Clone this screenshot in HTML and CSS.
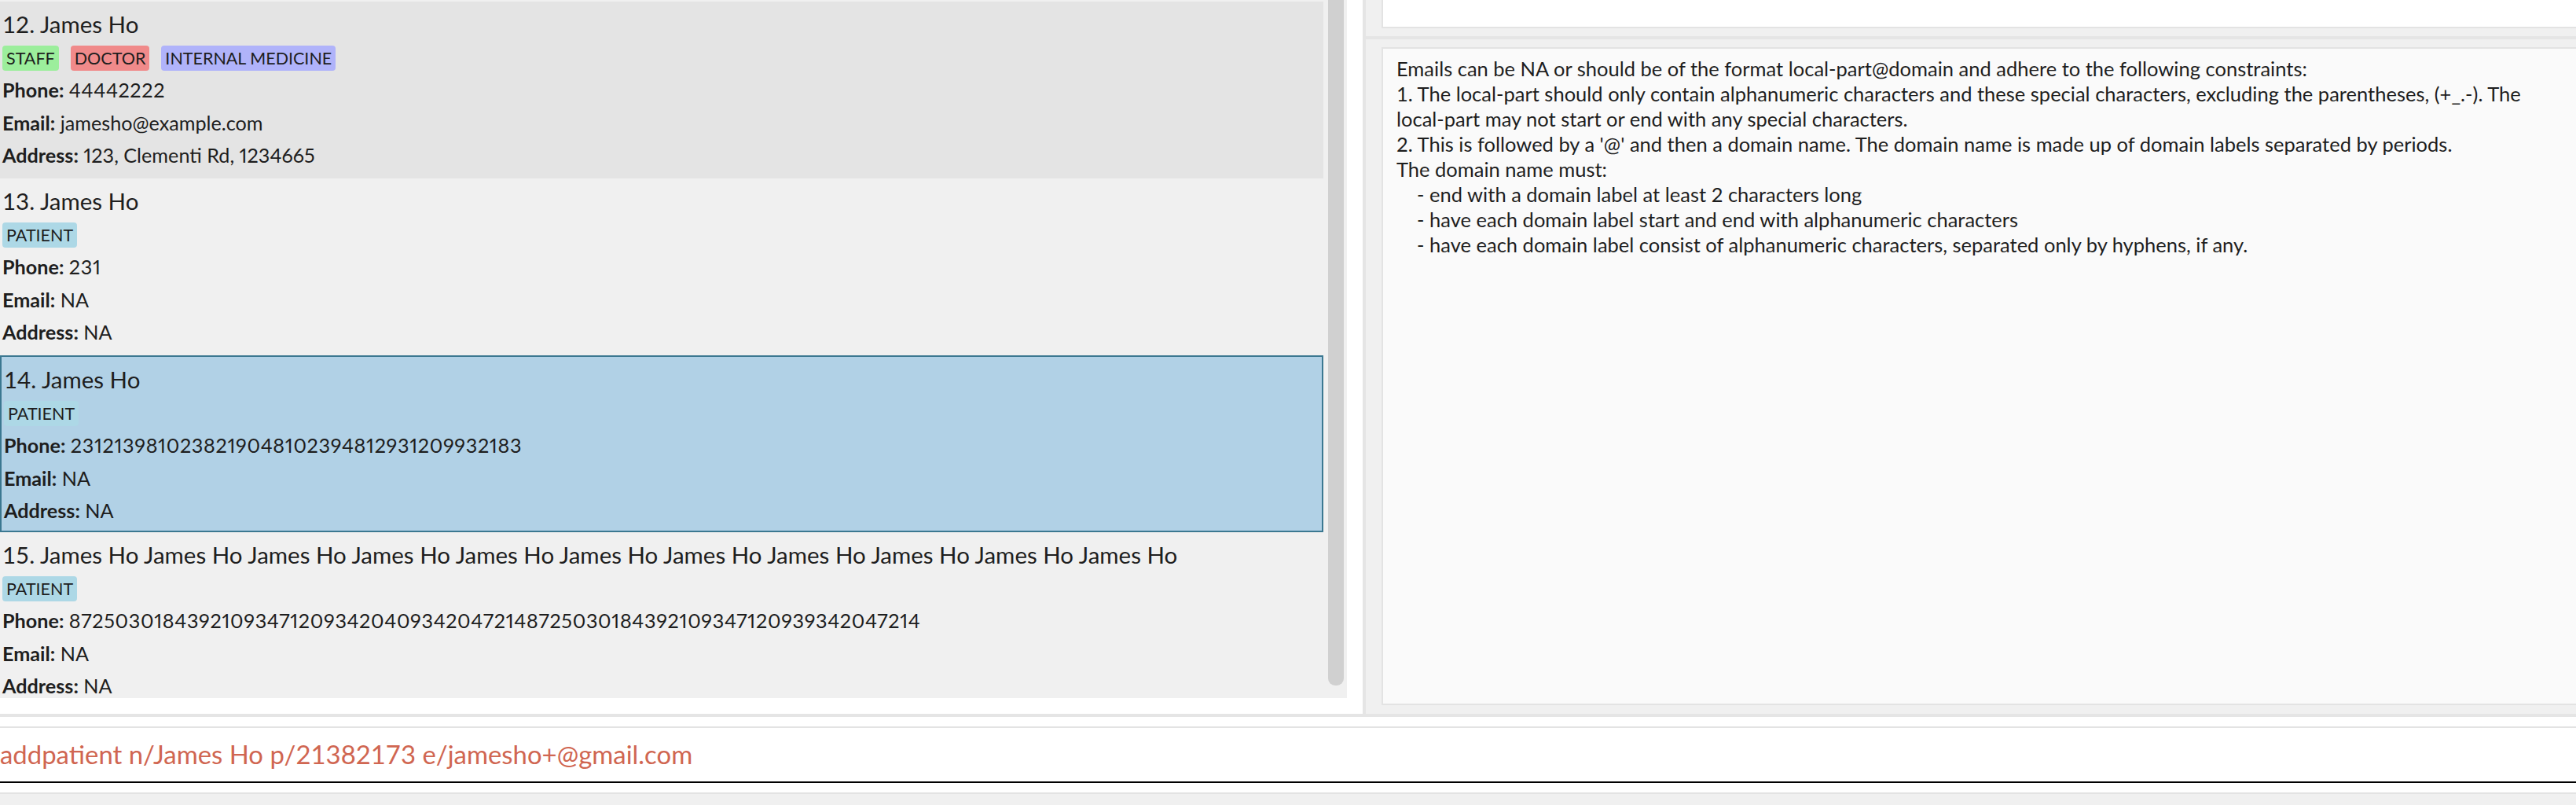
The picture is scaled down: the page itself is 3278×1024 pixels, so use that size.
FILE: index.html
```html
<!DOCTYPE html>
<html>
<head>
<meta charset="utf-8">
<title>Patients</title>
<link rel="stylesheet" href="styles.css">
</head>
<body>
<div class="app">
  <div class="main">
    <div class="left">
      <div class="list">
        <div class="cells">
          <div class="card dark">
            <div class="name">12. James Ho</div>
            <div class="tags"><span class="tag staff">STAFF</span><span class="tag doctor">DOCTOR</span><span class="tag spec">INTERNAL MEDICINE</span></div>
            <div class="field"><b>Phone:</b> <span class="num">44442222</span></div>
            <div class="field"><b>Email:</b> jamesho@example.com</div>
            <div class="field"><b>Address:</b> 123, Clementi Rd, 1234665</div>
          </div>
          <div class="card light">
            <div class="name">13. James Ho</div>
            <div class="tags"><span class="tag patient">PATIENT</span></div>
            <div class="field"><b>Phone:</b> <span class="num">231</span></div>
            <div class="field"><b>Email:</b> NA</div>
            <div class="field"><b>Address:</b> NA</div>
          </div>
          <div class="card sel">
            <div class="name">14. James Ho</div>
            <div class="tags"><span class="tag patient">PATIENT</span></div>
            <div class="field"><b>Phone:</b> <span class="num">2312139810238219048102394812931209932183</span></div>
            <div class="field"><b>Email:</b> NA</div>
            <div class="field"><b>Address:</b> NA</div>
          </div>
          <div class="card light">
            <div class="name">15. James Ho James Ho James Ho James Ho James Ho James Ho James Ho James Ho James Ho James Ho James Ho</div>
            <div class="tags"><span class="tag patient">PATIENT</span></div>
            <div class="field"><b>Phone:</b> <span class="num">8725030184392109347120934204093420472148725030184392109347120939342047214</span></div>
            <div class="field"><b>Email:</b> NA</div>
            <div class="field"><b>Address:</b> NA</div>
          </div>
        </div>
        <div class="scroll"><div class="thumb"></div></div>
      </div>
    </div>
    <div class="divider"></div>
    <div class="right">
      <div class="result-top"></div>
      <div class="hdiv"></div>
      <div class="result">
        <div class="line">Emails can be NA or should be of the format local-part@domain and adhere to the following constraints:</div>
        <div class="line">1. The local-part should only contain alphanumeric characters and these special characters, excluding the parentheses, (+_.-). The</div>
        <div class="line">local-part may not start or end with any special characters.</div>
        <div class="line">2. This is followed by a '@' and then a domain name. The domain name is made up of domain labels separated by periods.</div>
        <div class="line">The domain name must:</div>
        <div class="line">    - end with a domain label at least 2 characters long</div>
        <div class="line">    - have each domain label start and end with alphanumeric characters</div>
        <div class="line">    - have each domain label consist of alphanumeric characters, separated only by hyphens, if any.</div>
      </div>
    </div>
  </div>
  <div class="band"></div>
  <div class="cmd">
    <div class="input">addpatient n/James Ho p/21382173 e/jamesho+@gmail.com</div>
  </div>
  <div class="status"></div>
</div>
</body>
</html>
```

FILE: styles.css
```css
* { box-sizing: border-box; }
body {
  margin: 0;
  background: #f0f0f0;
  font-family: Lato, "Liberation Sans", Arial, sans-serif;
  color: #1e1e1e;
}
.app {
  width: 3278px;
  height: 1024px;
  overflow: hidden;
  display: flex;
  flex-direction: column;
}
.main {
  height: 908px;
  display: flex;
}
.left {
  width: 1734px;
  padding: 0 20px 20px 0;
  background: #ffffff;
}
.list {
  height: 888px;
  background: #f0f0f0;
  display: flex;
  overflow: hidden;
}
.cells {
  width: 1684px;
  padding-top: 2px;
  flex: none;
}
.scroll {
  width: 20px;
  margin-left: 6px;
}
.thumb {
  height: 872px;
  background: #d0d0d0;
  border-radius: 0 0 9px 9px;
}
.divider {
  width: 4px;
  background: #e5e5e5;
}
.right {
  flex: 1;
  background: #f0f0f0;
  padding-left: 20px;
  display: flex;
  flex-direction: column;
}
.result-top {
  height: 36px;
  background: #ffffff;
  border-left: 2px solid #e3e3e3;
  border-bottom: 2px solid #e3e3e3;
}
.hdiv {
  height: 4px;
  background: #e5e5e5;
  margin: 10px 0 10px -20px;
}
.result {
  height: 837px;
  background: #fafafa;
  border: 2px solid #e3e3e3;
  border-right: none;
  padding: 9px 17px;
  font-size: 25.5px;
  line-height: 32px;
}
.line { white-space: pre; }

.card {
  height: 225px;
  padding: 9px 0 0 3px;
  overflow: hidden;
}
.card.dark { background: #e4e4e4; }
.card.light { background: #f0f0f0; }
.card.sel {
  background: #b1d1e6;
  border: 2px solid #3b7891;
}
.name {
  font-size: 29.5px;
  line-height: 40px;
  white-space: nowrap;
}
.tags {
  display: flex;
  gap: 15px;
  margin-top: 7px;
  height: 32px;
}
.tag {
  font-size: 21.5px;
  line-height: 32px;
  padding: 0 5px;
  border-radius: 4px;
}
.tag.staff { background: #9cee9c; }
.tag.doctor { background: #f08a8a; }
.tag.spec { background: #b0b3fa; }
.tag.patient { background: #add8e6; }
.field {
  font-size: 25.2px;
  line-height: 41.5px;
  white-space: nowrap;
  font-variant-numeric: proportional-nums;
}
.tags + .field { margin-top: 4px; }
.field b { font-weight: 700; }
.num { letter-spacing: 0.65px; }

.band {
  height: 4px;
  background: #e5e5e5;
}
.cmd {
  background: #ffffff;
  padding: 12px 0;
}
.input {
  height: 72px;
  border-top: 2px solid #e3e3e3;
  border-bottom: 2px solid #000000;
  font-size: 32.9px;
  line-height: 68px;
  color: #d06651;
  white-space: nowrap;
}
.status {
  flex: 1;
  border-top: 2px solid #e3e3e3;
  background: #f0f0f0;
}
```
